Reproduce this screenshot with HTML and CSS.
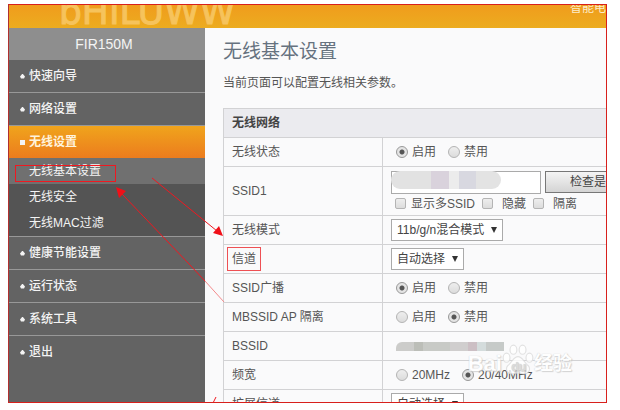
FILE: index.html
```html
<!DOCTYPE html>
<html lang="zh-CN">
<head>
    <meta charset="UTF-8">
    <title>无线基本设置</title>
    <meta name="viewport" content="width=device-width">
    <link rel="stylesheet" href="styles.css">
</head>
<body>
    <div class="frame">
        <header class="topbar">
            <span class="logo">bHILUWW</span>
            <span class="top-link">智能电</span>
        </header>

        <div class="page">
            <nav class="sidebar">
                <div class="model">FIR150M</div>
                <ul class="menu">
                    <li><a href="#">快速向导</a></li>
                    <li><a href="#">网络设置</a></li>
                    <li class="open">
                        <a href="#">无线设置</a>
                        <ul class="submenu">
                            <li class="current"><a href="#">无线基本设置</a></li>
                            <li><a href="#">无线安全</a></li>
                            <li><a href="#">无线MAC过滤</a></li>
                        </ul>
                    </li>
                    <li><a href="#">健康节能设置</a></li>
                    <li><a href="#">运行状态</a></li>
                    <li><a href="#">系统工具</a></li>
                    <li><a href="#">退出</a></li>
                </ul>
            </nav>

            <main class="content">
                <h1>无线基本设置</h1>
                <p class="intro">当前页面可以配置无线相关参数。</p>

                <table class="settings">
                    <colgroup>
                        <col class="name-col">
                        <col>
                    </colgroup>
                    <thead>
                        <tr><th colspan="2">无线网络</th></tr>
                    </thead>
                    <tbody>
                        <tr>
                            <td>无线状态</td>
                            <td>
                                <div class="options">
                                    <label><input type="radio" name="status" checked>启用</label>
                                    <label><input type="radio" name="status">禁用</label>
                                </div>
                            </td>
                        </tr>
                        <tr class="ssid-row">
                            <td><label for="ssid">SSID1</label></td>
                            <td>
                                <div class="ssid-line">
                                    <div class="ssid-box">
                                        <input type="text" id="ssid">
                                        <span class="masked over"></span>
                                    </div>
                                    <button type="button">检查是</button>
                                </div>
                                <div class="checks">
                                    <label><input type="checkbox">显示多SSID</label>
                                    <label class="wide"><input type="checkbox">隐藏</label>
                                    <label class="wide"><input type="checkbox">隔离</label>
                                </div>
                            </td>
                        </tr>
                        <tr>
                            <td><label for="mode">无线模式</label></td>
                            <td><div class="drop"><select id="mode"><option>11b/g/n混合模式</option></select></div></td>
                        </tr>
                        <tr>
                            <td><label for="channel" class="marked">信道</label></td>
                            <td><div class="drop"><select id="channel"><option>自动选择</option></select></div></td>
                        </tr>
                        <tr>
                            <td>SSID广播</td>
                            <td>
                                <div class="options">
                                    <label><input type="radio" name="broadcast" checked>启用</label>
                                    <label><input type="radio" name="broadcast">禁用</label>
                                </div>
                            </td>
                        </tr>
                        <tr>
                            <td>MBSSID AP 隔离</td>
                            <td>
                                <div class="options">
                                    <label><input type="radio" name="isolate">启用</label>
                                    <label><input type="radio" name="isolate" checked>禁用</label>
                                </div>
                            </td>
                        </tr>
                        <tr>
                            <td>BSSID</td>
                            <td><div class="masked"></div></td>
                        </tr>
                        <tr>
                            <td>频宽</td>
                            <td>
                                <div class="options">
                                    <label><input type="radio" name="width">20MHz</label>
                                    <label><input type="radio" name="width" checked>20/40MHz</label>
                                </div>
                            </td>
                        </tr>
                        <tr>
                            <td><label for="ext">扩展信道</label></td>
                            <td><div class="drop"><select id="ext"><option>自动选择</option></select></div></td>
                        </tr>
                    </tbody>
                </table>
            </main>
        </div>

        <!-- red guide marks -->
        <svg class="marks" width="600" height="400" viewBox="8 4 600 400">
            <g fill="none" stroke="#f01820">
                <rect x="15.5" y="165.5" width="100" height="16"/>
                <path d="M152 178L217 231"/>
                <path d="M122 194L190 265"/>
                <path d="M190 265L205 281"/>
                <path d="M205 281L224 302" stroke="#f48a8c"/>
                <path d="M216 397L213 403"/>
            </g>
            <path fill="#f01018" d="M223 236L213 233L219 226ZM116 187L126 191L119 198Z"/>
        </svg>

        <div class="watermark">
            <span>Bai</span>
            <svg width="32" height="32" viewBox="0 0 28 28">
                <g fill="#fff" stroke="#dcdcdc">
                    <ellipse cx="4" cy="12" rx="3" ry="4"/>
                    <ellipse cx="10" cy="5" rx="3" ry="4"/>
                    <ellipse cx="18" cy="5" rx="3" ry="4"/>
                    <ellipse cx="24" cy="12" rx="3" ry="4"/>
                    <path d="M14 11C18 11 19 16 23 19C26 23 22 27 18 26C15 25 13 25 10 26C6 27 2 23 5 19C9 16 10 11 14 11Z"/>
                </g>
                <text class="du" x="8" y="24">du</text>
            </svg>
            <span class="cn">经验</span>
        </div>
    </div>
</body>
</html>
```
FILE: styles.css
```css
*,
*::after,
*::before{
    padding: 0;
    margin: 0;
    box-sizing: border-box;
}
body{
    font: 12px/16px "Liberation Sans", "Noto Sans CJK SC", sans-serif;
    color: #555;
    background-color: #fff;
    height: 100vh;
    padding: 4px 13px 7px 8px;
}
a{
    color: inherit;
    text-decoration: none;
}
ul{
    list-style: none;
}
.frame{
    position: relative;
    display: flex;
    flex-direction: column;
    height: 100%;
    overflow: hidden;
    border: 1px solid #d8201c;
    border-left-color: #b03030;
    background-color: #fafafb;
}

/* orange bar */
.topbar{
    display: flex;
    justify-content: space-between;
    align-items: flex-end;
    flex: none;
    height: 23px;
    overflow: hidden;
    padding-left: 50px;
    background-image: linear-gradient(#f09c1c, #ecac20);
}
.logo{
    font: 36px/36px "DejaVu Sans", sans-serif;
    -webkit-text-stroke: 1px #f6c35c;
    margin-bottom: -2px;
    color: #f6c35c;
}
.top-link{
    color: #fdeccb;
    align-self: flex-start;
    margin-top: -5px;
}
.page{
    display: flex;
    flex: 1;
    min-height: 0;
}

/* left menu */
.sidebar{
    flex: none;
    width: 196px;
    color: #f4f4f4;
    background-color: #636363;
}
.model{
    font-size: 14px;
    line-height: 32px;
    text-align: center;
    padding-right: 6px;
    background-color: #8e8e8e;
}
.menu > li{
    border-bottom: 1px solid #989898;
}
.menu > li:last-child{
    border-bottom: none;
}
.menu > li > a{
    display: flex;
    align-items: center;
    gap: 4px;
    height: 32px;
    padding-left: 11px;
    font-weight: 500;
}
.menu > li > a::before{
    content: "";
    width: 5px;
    height: 5px;
    background-color: #f4f4f4;
    clip-path: polygon(50% 0, 100% 60%, 80% 100%, 20% 100%, 0 60%);
}
.menu > li.open > a{
    font-weight: bold;
    color: #fff3dc;
    background-image: linear-gradient(#f0a41c, #ec7c1e);
}
.menu > li.open > a::before{
    clip-path: none;
}
.submenu{
    background-color: #545454;
}
.submenu a{
    display: block;
    padding-left: 20px;
    line-height: 26px;
}
.submenu .current{
    background-color: #707070;
}

/* settings */
.content{
    flex: 1;
    min-width: 0;
    overflow: hidden;
    padding: 12px 0 0 18px;
}
h1{
    font-size: 19px;
    font-weight: normal;
    line-height: 24px;
    color: #66727f;
}
.intro{
    margin: 11px 0 17px;
}
.settings{
    width: 100%;
    table-layout: fixed;
    border-collapse: collapse;
}
.name-col{
    width: 159px;
}
.settings tr{
    height: 29px;
}
.settings .ssid-row{
    height: 49px;
}
.settings th,
.settings td{
    padding-left: 8px;
    border: 1px solid #d2d2d4;
    border-right: none;
    white-space: nowrap;
}
.settings th{
    text-align: left;
    color: #444;
    background-color: #ebebef;
}
.options,
.options label,
.checks,
.checks label{
    display: flex;
    align-items: center;
}
.options{
    gap: 12px;
    padding-left: 5px;
}
.options label{
    gap: 4px;
}
.checks{
    gap: 7px;
    padding-left: 4px;
    margin-top: 2px;
}
.checks label{
    gap: 5px;
}
.checks .wide{
    gap: 9px;
}
input[type="radio"],
input[type="checkbox"]{
    appearance: none;
    flex: none;
    width: 12px;
    height: 12px;
    border: 1px solid #b4b4b4;
    background-image: linear-gradient(#eee, #dcdcdc);
}
input[type="radio"]{
    border-radius: 50%;
}
input[type="radio"]:checked{
    border-color: #999;
    background-image: radial-gradient(circle, #555 0, #555 2px, #e4e4e4 3px);
}
input[type="checkbox"]{
    width: 11px;
    height: 11px;
    border-radius: 2px;
}
.ssid-line{
    display: flex;
    gap: 4px;
}
.ssid-box{
    position: relative;
    flex: none;
    width: 150px;
}
.ssid-box input{
    display: block;
    width: 100%;
    height: 23px;
    border: 1px solid #aaa;
    background-color: #fff;
}
.ssid-line button{
    flex: none;
    height: 22px;
    padding: 0 24px;
    font: inherit;
    color: #444;
    border: 1px solid #777;
    background-image: linear-gradient(#f4f4f4, #d4d4d4);
}
.masked{
    width: 108px;
    height: 9px;
    margin-left: 5px;
    border-radius: 6px 0 0 0;
    background-image: linear-gradient(90deg, #ccccca 0 18px, #bcbeb8 18px 27px, #c8cac6 27px 54px, #d0cece 54px 72px, #ccbfc4 72px 81px, #d4dcdc 81px 90px, #c6cac8 90px);
}
.masked.over{
    position: absolute;
    top: 0;
    left: 0;
    width: 110px;
    height: 18px;
    margin-left: 0;
    border-radius: 9px;
    background-image: linear-gradient(90deg, #e2e2e2 0 40px, #d9d2dc 40px 58px, #ececec 58px 68px, #d8d8e0 68px 85px, #e3e3e3 85px);
}
.drop{
    position: relative;
    width: fit-content;
}
.drop select{
    appearance: none;
    display: block;
    height: 22px;
    padding: 0 17px 0 5px;
    font: inherit;
    color: #444;
    border: 1px solid #aaa;
    background-color: #fff;
}
.drop::after{
    content: "";
    position: absolute;
    top: 8px;
    right: 6px;
    border: 3px solid transparent;
    border-top: 6px solid #333;
    border-bottom: none;
    pointer-events: none;
}

/* things that lie over the page */
.marked{
    position: relative;
}
.marked::after{
    content: "";
    position: absolute;
    inset: -5px;
    border: 1px solid #ee5054;
}
.marks{
    position: absolute;
    top: -1px;
    left: -1px;
    pointer-events: none;
}
.watermark{
    position: absolute;
    right: 34px;
    bottom: 26px;
    display: flex;
    align-items: flex-end;
    opacity: 0.8;
    font-size: 22px;
    font-weight: bold;
    line-height: 24px;
    color: #fff;
    text-shadow: 0 0 1px #bbb, 1px 1px 1px #ccc;
    pointer-events: none;
}
.watermark .cn{
    font-size: 19px;
}
.du{
    font-size: 11px;
    fill: #d4d4d4;
    stroke: none;
}
```
